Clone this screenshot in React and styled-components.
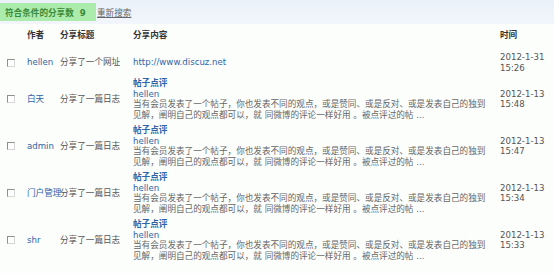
import React from 'react';
import styled, { createGlobalStyle } from 'styled-components';

const Global = createGlobalStyle`
  html, body {
    margin: 0;
    padding: 0;
    background: #fcfefc;
    font-family: "DejaVu Sans", "Noto Sans CJK SC", sans-serif;
    font-size: 8.6px;
    color: #555;
  }
`;

const Bar = styled.div`
  height: 24px;
  background: linear-gradient(#eaf1f9, #f2f6fb);
  display: flex;
  align-items: center;
`;

const Count = styled.div`
  height: 18px;
  width: 96px;
  box-sizing: border-box;
  padding-left: 5px;
  background: #abebab;
  color: #3a8a3a;
  font-weight: bold;
  display: flex;
  align-items: center;
  white-space: nowrap;
`;

const Reset = styled.a`
  margin-left: 1px;
  color: #666;
  text-decoration: underline;
  cursor: pointer;
`;

const Table = styled.div`
  display: grid;
  grid-template-columns: 27px 33px 73px 367px 1fr;
  line-height: 10.5px;
`;

const Row = styled.div`
  display: contents;
`;

const Cell = styled.div`
  display: flex;
  flex-direction: column;
  justify-content: center;
  padding: ${p => (p.$head ? '6px 0 9px' : '2.5px 0')};
  white-space: ${p => (p.$wrap ? 'normal' : 'nowrap')};
  color: ${p => (p.$head ? '#333' : '#555')};
  font-weight: ${p => (p.$head ? 'bold' : 'normal')};
`;

const BoxCell = styled(Cell)`
  align-items: flex-start;
  padding-left: 7px;
`;

const Check = styled.span`
  width: 8px;
  height: 8px;
  box-sizing: border-box;
  border: 1px solid #8f8f8f;
  border-right-color: #d6d6d6;
  border-bottom-color: #d6d6d6;
  background: #fff;
`;

const Author = styled.a`
  color: #2f64a8;
  cursor: pointer;
`;

const Url = styled.a`
  color: #2f64a8;
`;

const PostTitle = styled.div`
  color: #2f64a8;
  font-weight: bold;
`;

const PostUser = styled.div`
  color: #2f64a8;
`;

const PostText = styled.div`
  color: #666;
`;

const Time = styled.div`
  color: #555;
  width: 52px;
`;

const excerpt = [
  '当有会员发表了一个帖子，你也发表不同的观点，或是赞同、或是反对、或是发表自己的独到',
  '见解，阐明自己的观点都可以，就 同微博的评论一样好用 。被点评过的帖 ...',
];

const rows = [
  { author: 'hellen', title: '分享了一个网址', url: 'http://www.discuz.net', time: ['2012-1-31', '15:26'] },
  { author: '白天', title: '分享了一篇日志', time: ['2012-1-13', '15:48'] },
  { author: 'admin', title: '分享了一篇日志', time: ['2012-1-13', '15:47'] },
  { author: '门户管理', title: '分享了一篇日志', time: ['2012-1-13', '15:34'] },
  { author: 'shr', title: '分享了一篇日志', time: ['2012-1-13', '15:33'] },
];

export default function App() {
  return (
    <>
      <Global />
      <Bar>
        <Count>符合条件的分享数 &nbsp;9</Count>
        <Reset>重新搜索</Reset>
      </Bar>
      <Table>
        <Row>
          <Cell $head />
          <Cell $head>作者</Cell>
          <Cell $head>分享标题</Cell>
          <Cell $head>分享内容</Cell>
          <Cell $head>时间</Cell>
        </Row>
        {rows.map((r, i) => (
          <Row key={i}>
            <BoxCell><Check /></BoxCell>
            <Cell><Author>{r.author}</Author></Cell>
            <Cell>{r.title}</Cell>
            <Cell>
              {r.url ? (
                <Url>{r.url}</Url>
              ) : (
                <>
                  <PostTitle>帖子点评</PostTitle>
                  <PostUser>hellen</PostUser>
                  {excerpt.map(t => <PostText key={t}>{t}</PostText>)}
                </>
              )}
            </Cell>
            <Cell>
              <Time>{r.time[0]}<br />{r.time[1]}</Time>
            </Cell>
          </Row>
        ))}
      </Table>
    </>
  );
}
